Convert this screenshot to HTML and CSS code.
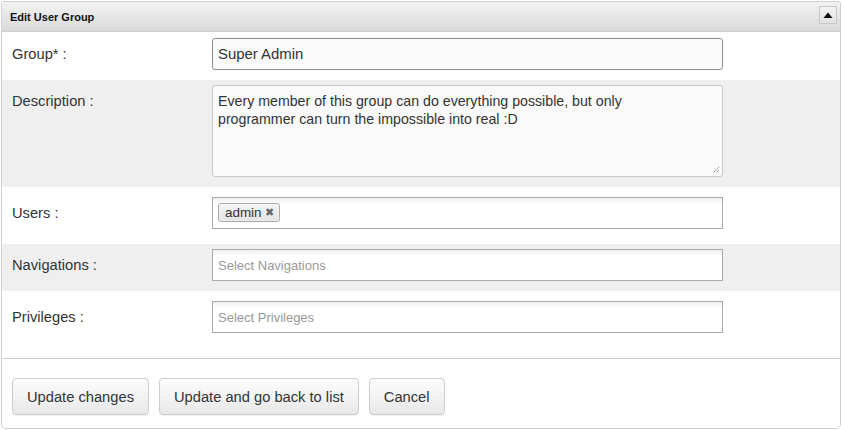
FILE: index.html
```html
<!DOCTYPE html>
<html>
<head>
<meta charset="utf-8">
<link rel="stylesheet" href="styles.css">
</head>
<body>
<div class="panel">
  <div class="panel-head">
    <span class="title">Edit User Group</span>
    <span class="toggle"><svg width="10" height="6" viewBox="0 0 10 6"><path d="M0.5 6 L5 0.5 L9.5 6 Z" fill="#111"/></svg></span>
  </div>
  <div class="row r-group">
    <div class="label">Group* :</div>
    <div class="field"><div class="text-input">Super Admin</div></div>
  </div>
  <div class="row alt r-desc">
    <div class="label">Description :</div>
    <div class="field"><div class="textarea">Every member of this group can do everything possible, but only programmer can turn the impossible into real :D<span class="grip"><svg width="8" height="8" viewBox="0 0 8 8"><path d="M7 1 L1 7 M7 4 L4 7" stroke="#666" stroke-width="1" stroke-dasharray="1 1"/></svg></span></div></div>
  </div>
  <div class="row r-users">
    <div class="label">Users :</div>
    <div class="field"><div class="select"><span class="tag">admin <span class="x">✖</span></span></div></div>
  </div>
  <div class="row alt r-nav">
    <div class="label">Navigations :</div>
    <div class="field"><div class="select"><span class="ph">Select Navigations</span></div></div>
  </div>
  <div class="row r-priv">
    <div class="label">Privileges :</div>
    <div class="field"><div class="select"><span class="ph">Select Privileges</span></div></div>
  </div>
  <div class="actions">
    <button class="btn">Update changes</button>
    <button class="btn">Update and go back to list</button>
    <button class="btn">Cancel</button>
  </div>
</div>
</body>
</html>
```
FILE: styles.css
```css
html, body { margin: 0; padding: 0; background: #fff; }
body { padding: 1px 0 0 1px; font-family: "Liberation Sans", Arial, sans-serif; color: #333; }
.panel {
  width: 840px; height: 428px; box-sizing: border-box;
  border: 1px solid #d0d0d0; border-radius: 3px 3px 5px 5px; overflow: hidden;
}
.panel-head {
  height: 30px; box-sizing: border-box;
  display: flex; align-items: center; justify-content: space-between;
  padding: 0 3px 0 8px;
  background: linear-gradient(#f3f3f3, #d9d9d9);
  border-bottom: 1px solid #cfcfcf;
}
.title { font-size: 11px; font-weight: bold; color: #111; margin-top: 1px; }
.toggle {
  width: 18px; height: 18px; box-sizing: border-box; margin-top: -3px;
  border: 1px solid #c8c8c8; background: linear-gradient(#f4f4f4, #e2e2e2);
  display: flex; align-items: center; justify-content: center;
}
.toggle svg { display: block; margin-top: -1px; }
.row { display: flex; align-items: flex-start; padding-left: 10px; }
.alt { background: #efefef; }
.r-group { padding-top: 6px; padding-bottom: 10px; }
.r-desc { padding-top: 5px; padding-bottom: 10px; }
.r-users { padding-top: 10px; padding-bottom: 15px; }
.r-nav { padding-top: 5px; padding-bottom: 10px; }
.r-priv { padding-top: 10px; padding-bottom: 25px; }
.label { width: 200px; font-size: 14.7px; line-height: 32px; color: #333; }
.field { width: 511px; }
.text-input {
  height: 32px; box-sizing: border-box; border: 1px solid #8e8e8e; border-radius: 3px;
  background: #fafafa; padding: 0 5px; font-size: 14.9px; line-height: 30px; color: #333;
}
.textarea {
  position: relative;
  height: 92px; box-sizing: border-box; border: 1px solid #c9c9c9; border-radius: 3px;
  background: #fafafa; padding: 6px 5px; font-size: 14.2px; line-height: 18px; color: #333;
  padding-right: 80px;
}
.grip { position: absolute; right: 2px; bottom: 2px; width: 8px; height: 8px; }
.grip svg { display: block; }
.select {
  height: 32px; box-sizing: border-box; border: 1px solid #aaa;
  background: linear-gradient(#eee 0, #fff 6px, #fff 100%);
  padding: 0 5px; display: flex; align-items: center;
}
.ph { font-size: 13px; color: #999; }
.tag {
  display: inline-flex; align-items: center; height: 19px; box-sizing: border-box;
  border: 1px solid #aaa; border-radius: 3px; padding: 0 5px 0 6px; margin-top: -2px;
  background: linear-gradient(#f4f4f4, #e3e3e3); font-size: 13.4px; color: #333;
  box-shadow: 0 0 2px #fff inset;
}
.x { font-size: 11px; color: #666; margin-left: 4px; }
.actions {
  border-top: 1px solid #ccc; padding: 19px 0 0 10px; display: flex; gap: 10px;
}
.btn {
  height: 37px; box-sizing: border-box; padding: 0 14px;
  font-family: "Liberation Sans", Arial, sans-serif; font-size: 14.7px; color: #333;
  border: 1px solid #ccc; border-radius: 4px;
  background: linear-gradient(#fdfdfd, #e8e8e8);
  box-shadow: 0 1px 1px rgba(0,0,0,0.06);
}
```
